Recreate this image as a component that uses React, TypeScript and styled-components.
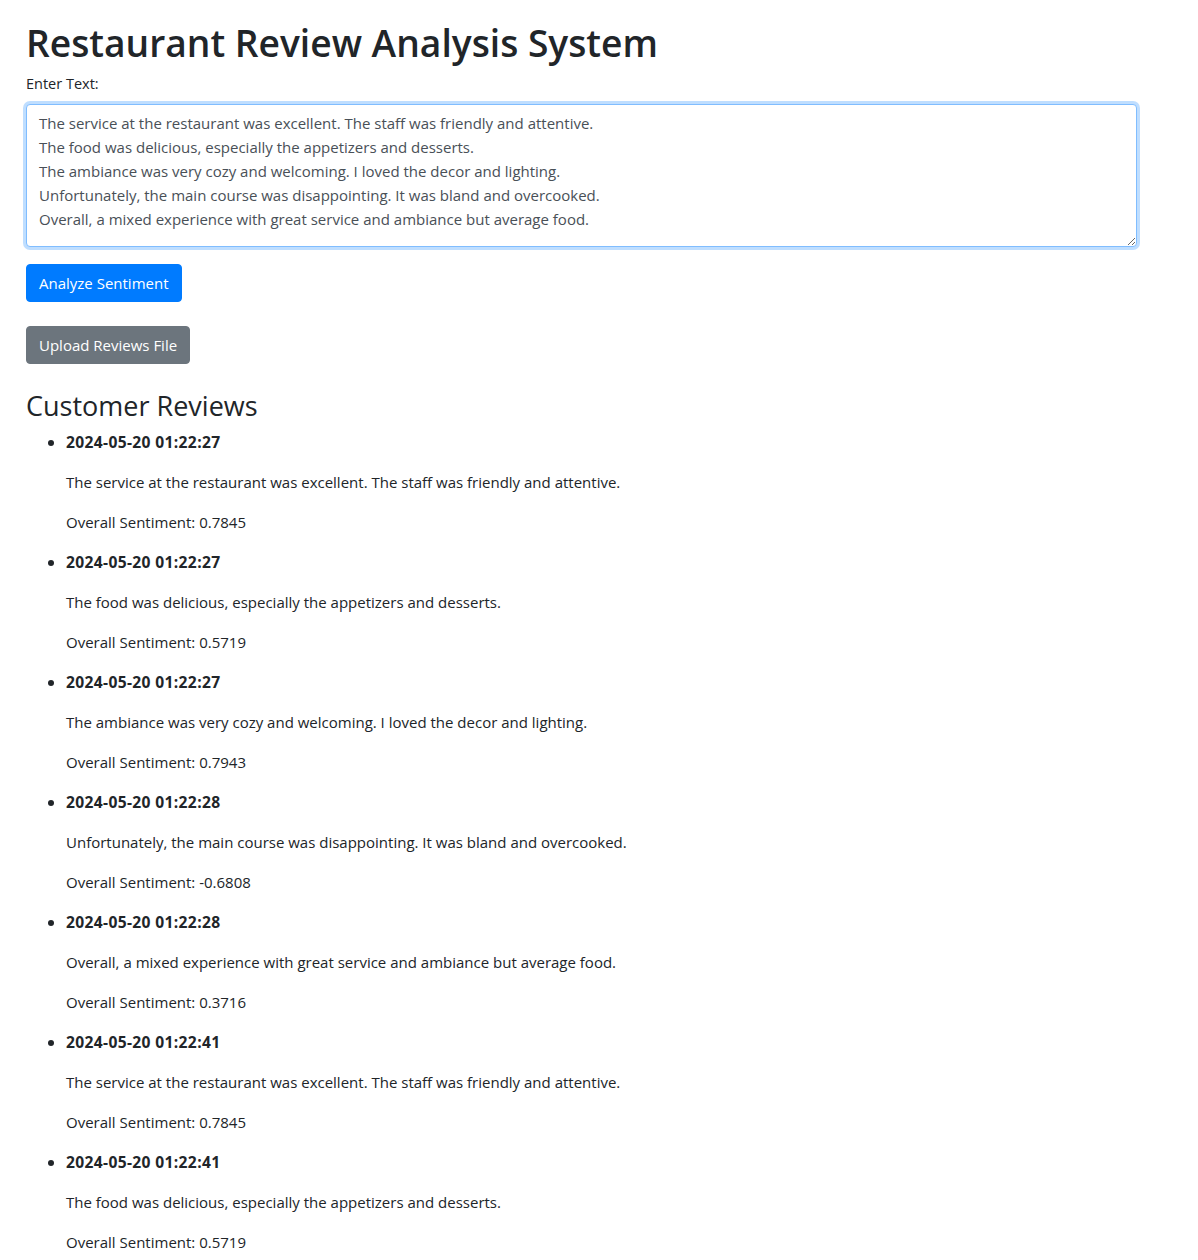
import React from "react";
import styled, { createGlobalStyle } from "styled-components";

const Global = createGlobalStyle`
  html, body { margin: 0; padding: 0; background: #fff; }
  body {
    font-family: "Open Sans", "Noto Sans", sans-serif;
    font-size: 15px;
    line-height: 24px;
    color: #212529;
  }
`;

const Page = styled.div`
  padding: 19px 26px 0 26px;
`;

const Title = styled.h1`
  margin: 0 0 6px 0;
  font-size: 37.2px;
  font-weight: 600;
  line-height: 46px;
  padding-top: 1px;
`;

const Label = styled.label`
  display: block;
  font-size: 14.5px;
  margin-bottom: 8px;
`;

const TextArea = styled.textarea`
  display: block;
  box-sizing: border-box;
  width: 1111px;
  height: 143px;
  padding: 6px 12px;
  font-family: inherit;
  font-size: 15px;
  line-height: 24px;
  color: #495057;
  background: #fff;
  border: 1px solid #80bdff;
  border-radius: 4px;
  box-shadow: 0 0 0 3px rgba(0, 123, 255, 0.25);
  outline: none;
  resize: vertical;
  margin: 0;
`;

const Button = styled.button<{ $variant: "primary" | "secondary" }>`
  display: inline-block;
  height: 38px;
  padding: 6px 12px;
  font-family: inherit;
  font-size: 15px;
  line-height: 24px;
  color: #fff;
  border: 1px solid ${(p) => (p.$variant === "primary" ? "#007bff" : "#6c757d")};
  background: ${(p) => (p.$variant === "primary" ? "#007bff" : "#6c757d")};
  border-radius: 4px;
  cursor: pointer;
`;

const ButtonRow = styled.div<{ $top: number }>`
  margin-top: ${(p) => p.$top}px;
`;

const SectionTitle = styled.h2`
  margin: 26px 0 8px 0;
  font-size: 27px;
  font-weight: 500;
  line-height: 1.2;
`;

const List = styled.ul`
  margin: 0;
  padding-left: 40px;
`;

const Item = styled.li`
  font-size: 16px;
  line-height: 24px;
`;

const Stamp = styled.strong`
  display: block;
  font-weight: 700;
  font-size: 15.6px;
  letter-spacing: 0.35px;
  margin-bottom: 16px;
`;

const Para = styled.p`
  margin: 0 0 16px 0;
  font-size: 15px;
  line-height: 24px;
`;

const text = `The service at the restaurant was excellent. The staff was friendly and attentive.
The food was delicious, especially the appetizers and desserts.
The ambiance was very cozy and welcoming. I loved the decor and lighting.
Unfortunately, the main course was disappointing. It was bland and overcooked.
Overall, a mixed experience with great service and ambiance but average food.`;

const reviews = [
  { t: "2024-05-20 01:22:27", s: "The service at the restaurant was excellent. The staff was friendly and attentive.", v: "0.7845" },
  { t: "2024-05-20 01:22:27", s: "The food was delicious, especially the appetizers and desserts.", v: "0.5719" },
  { t: "2024-05-20 01:22:27", s: "The ambiance was very cozy and welcoming. I loved the decor and lighting.", v: "0.7943" },
  { t: "2024-05-20 01:22:28", s: "Unfortunately, the main course was disappointing. It was bland and overcooked.", v: "-0.6808" },
  { t: "2024-05-20 01:22:28", s: "Overall, a mixed experience with great service and ambiance but average food.", v: "0.3716" },
  { t: "2024-05-20 01:22:41", s: "The service at the restaurant was excellent. The staff was friendly and attentive.", v: "0.7845" },
  { t: "2024-05-20 01:22:41", s: "The food was delicious, especially the appetizers and desserts.", v: "0.5719" },
];

export default function App() {
  return (
    <>
      <Global />
      <Page>
        <Title>Restaurant Review Analysis System</Title>
        <Label htmlFor="t">Enter Text:</Label>
        <TextArea id="t" defaultValue={text} />
        <ButtonRow $top={17}>
          <Button $variant="primary">Analyze Sentiment</Button>
        </ButtonRow>
        <ButtonRow $top={24}>
          <Button $variant="secondary">Upload Reviews File</Button>
        </ButtonRow>
        <SectionTitle>Customer Reviews</SectionTitle>
        <List>
          {reviews.map((r, i) => (
            <Item key={i}>
              <Stamp>{r.t}</Stamp>
              <Para>{r.s}</Para>
              <Para>Overall Sentiment: {r.v}</Para>
            </Item>
          ))}
        </List>
      </Page>
    </>
  );
}
